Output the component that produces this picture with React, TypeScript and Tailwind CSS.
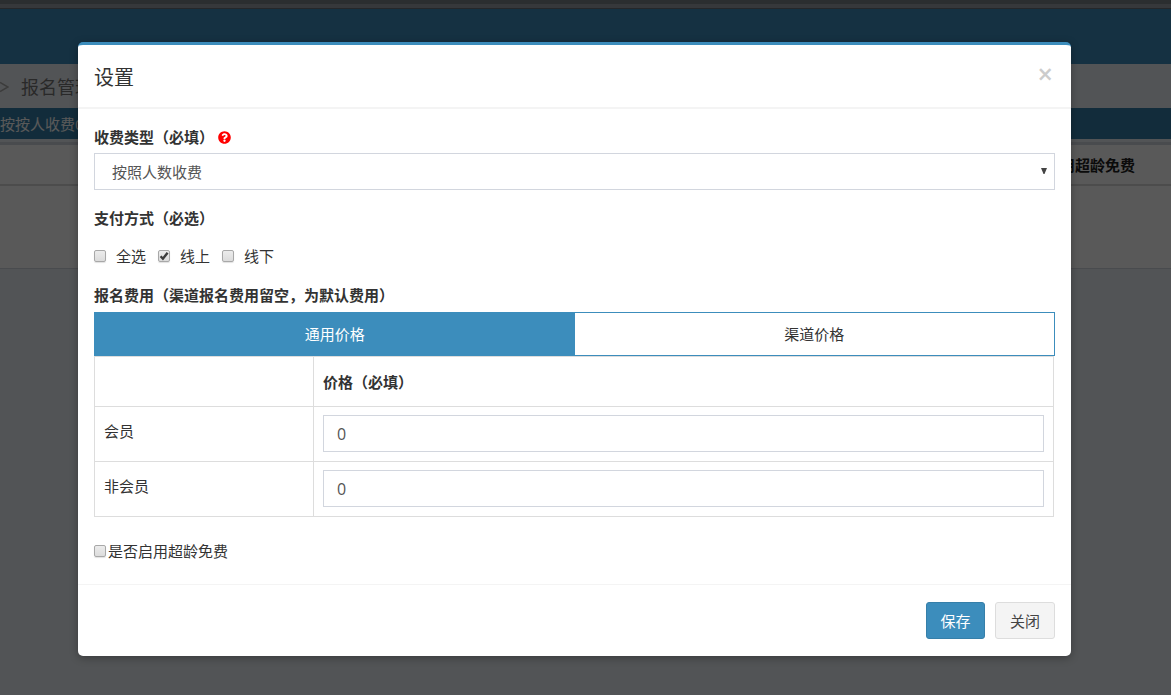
import { useState } from "react";
import { FaQuestionCircle } from "react-icons/fa";

const CHARGE_TYPES = [
  { value: "person", label: "按照人数收费" },
  { value: "team", label: "按照团队收费" },
];

const PAYMENT_METHODS = [
  { key: "all", label: "全选" },
  { key: "online", label: "线上" },
  { key: "offline", label: "线下" },
];

const PRICE_TABS = [
  { key: "common", label: "通用价格" },
  { key: "channel", label: "渠道价格" },
];

const PRICE_ROWS = [
  { key: "member", label: "会员" },
  { key: "guest", label: "非会员" },
];

interface CheckboxProps {
  id: string;
  checked: boolean;
  onChange: (checked: boolean) => void;
}

function Checkbox({ id, checked, onChange }: CheckboxProps) {
  return (
    <span className="inline-grid">
      <input
        id={id}
        type="checkbox"
        checked={checked}
        onChange={(e) => onChange(e.target.checked)}
        className="peer col-start-1 row-start-1 size-3 appearance-none rounded-xs border border-[#a8a8a8] bg-linear-to-b from-[#ececec] to-[#dcdcdc] shadow-[0_1px_1px_rgba(0,0,0,0.12)]"
      />
      <svg
        viewBox="0 0 12 12"
        className="pointer-events-none invisible col-start-1 row-start-1 size-3 peer-checked:visible"
      >
        <path d="M2.6 6.2 4.9 8.7 9.6 2.8" fill="none" stroke="#3c3c3c" strokeWidth="2.4" />
      </svg>
    </span>
  );
}

function PageBackground() {
  return (
    <div className="col-start-1 row-start-1 min-w-0 bg-[#ecf0f5]">
      <div className="h-1 bg-[#7b838b]" />
      <div className="h-1 bg-[#9aa0a8]" />
      <div className="h-14 border-t border-[#6a7078] bg-[#3c8dbc]" />
      <div className="flex h-11 items-center gap-3 overflow-hidden pt-0.5 text-[18px] whitespace-nowrap text-[#777]">
        <svg viewBox="0 0 9 12" className="h-3 w-[9px]">
          <path d="M0 1.5 8 6 0 10.5" fill="none" stroke="#aaa" strokeWidth="1.5" />
        </svg>
        <span>报名管理</span>
      </div>
      <div className="flex h-[31px] items-center overflow-hidden bg-[#367fa9] whitespace-nowrap text-white">
        按按人收费0元
      </div>
      <div className="mt-[3px] border-t-[3px] border-[#d2d6de] bg-white">
        <table className="w-full border-collapse">
          <thead>
            <tr className="h-10 border-b-2 border-[#d9d9d9]">
              <th className="pr-9 text-right font-bold text-[#222]">是否启用超龄免费</th>
            </tr>
          </thead>
          <tbody>
            <tr className="h-[83px] border-b border-[#d2d6de]">
              <td />
            </tr>
          </tbody>
        </table>
      </div>
    </div>
  );
}

export default function App() {
  const [chargeType, setChargeType] = useState("person");
  const [methods, setMethods] = useState<Record<string, boolean>>({ online: true });
  const [activeTab, setActiveTab] = useState("common");
  const [prices, setPrices] = useState<Record<string, string>>({ member: "0", guest: "0" });
  const [overAgeFree, setOverAgeFree] = useState(false);

  return (
    <div className="grid min-h-screen grid-cols-1 font-['Open_Sans','Noto_Sans_CJK_SC',sans-serif] text-[15px] leading-[22px] text-[#333]">
      <PageBackground />

      <div className="col-start-1 row-start-1 min-w-0 bg-black/65 pt-[42px] pr-[100px] pb-[39px] pl-[78px]">
        <div
          role="dialog"
          aria-labelledby="dialog-title"
          className="rounded-[5px] border-t-3 border-[#3c8dbc] bg-white shadow-[0_2px_8px_rgba(0,0,0,0.3)]"
        >
          <div className="flex items-start justify-between border-b-2 border-[#f4f4f4] px-4 pt-[18px] pb-[14px]">
            <h4 id="dialog-title" className="text-[20px] leading-[30px]">
              设置
            </h4>
            <button type="button" aria-label="关闭窗口" className="px-0.5 text-[27px] font-semibold text-[#ccc]">
              ×
            </button>
          </div>

          <div className="px-4 pt-[17px] pb-[22px]">
            <div className="mb-[5px] flex items-center gap-1">
              <label htmlFor="charge-type" className="font-bold">
                收费类型（必填）
              </label>
              <FaQuestionCircle className="size-[13px] text-[#f00]" />
            </div>
            <div className="grid items-center">
              <select
                id="charge-type"
                value={chargeType}
                onChange={(e) => setChargeType(e.target.value)}
                className="col-start-1 row-start-1 h-[37px] w-full appearance-none border border-[#d2d6de] bg-white px-[17px] text-[#555]"
              >
                {CHARGE_TYPES.map((t) => (
                  <option key={t.value} value={t.value}>
                    {t.label}
                  </option>
                ))}
              </select>
              <svg
                viewBox="0 0 6 6"
                className="pointer-events-none col-start-1 row-start-1 mr-2 mb-0.5 size-1.5 justify-self-end"
              >
                <path d="M0 0h6L3.5 6h-1z" fill="#444" />
              </svg>
            </div>

            <fieldset className="mt-[17px]">
              <legend className="font-bold">支付方式（必选）</legend>
              <div className="mt-4 flex gap-3">
                {PAYMENT_METHODS.map((m) => (
                  <label key={m.key} htmlFor={`pay-${m.key}`} className="flex items-center gap-2.5">
                    <Checkbox
                      id={`pay-${m.key}`}
                      checked={methods[m.key] ?? false}
                      onChange={(checked) => setMethods((prev) => ({ ...prev, [m.key]: checked }))}
                    />
                    {m.label}
                  </label>
                ))}
              </div>
            </fieldset>

            <p className="mt-[17px] mb-[6px] font-bold">报名费用（渠道报名费用留空，为默认费用）</p>
            <div role="tablist" className="grid h-11 grid-cols-2 border border-[#3c8dbc]">
              {PRICE_TABS.map((tab) => (
                <button
                  key={tab.key}
                  type="button"
                  role="tab"
                  aria-selected={activeTab === tab.key}
                  onClick={() => setActiveTab(tab.key)}
                  className={activeTab === tab.key ? "bg-[#3c8dbc] text-white" : "bg-white"}
                >
                  {tab.label}
                </button>
              ))}
            </div>
            <table className="w-[calc(100%-1px)] border-collapse">
              <thead>
                <tr className="h-[50px]">
                  <td className="w-[219px] border border-[#ddd]" />
                  <th className="border border-[#ddd] px-[9px] text-left font-bold">价格（必填）</th>
                </tr>
              </thead>
              <tbody>
                {PRICE_ROWS.map((row) => (
                  <tr key={row.key} className="h-[55px]">
                    <td className="border border-[#ddd] px-[9px] pt-2 align-top leading-8">
                      <label htmlFor={`price-${row.key}`}>{row.label}</label>
                    </td>
                    <td className="border border-[#ddd] px-[9px] pt-2 align-top">
                      <input
                        id={`price-${row.key}`}
                        type="text"
                        value={prices[row.key]}
                        onChange={(e) => setPrices((prev) => ({ ...prev, [row.key]: e.target.value }))}
                        className="block h-[37px] w-full border border-[#d2d6de] px-[13px] text-[16px] text-[#555]"
                      />
                    </td>
                  </tr>
                ))}
              </tbody>
            </table>

            <label htmlFor="over-age-free" className="mt-[23px] flex items-baseline gap-0.5">
              <Checkbox id="over-age-free" checked={overAgeFree} onChange={setOverAgeFree} />
              是否启用超龄免费
            </label>
          </div>

          <div className="flex justify-end gap-2.5 border-t border-[#f4f4f4] px-4 py-[17px]">
            <button
              type="button"
              className="h-[37px] w-[59px] rounded-[3px] border border-[#367fa9] bg-[#3c8dbc] text-white"
            >
              保存
            </button>
            <button
              type="button"
              className="h-[37px] w-[60px] rounded-[3px] border border-[#ddd] bg-[#f4f4f4] text-[#444]"
            >
              关闭
            </button>
          </div>
        </div>
      </div>
    </div>
  );
}
